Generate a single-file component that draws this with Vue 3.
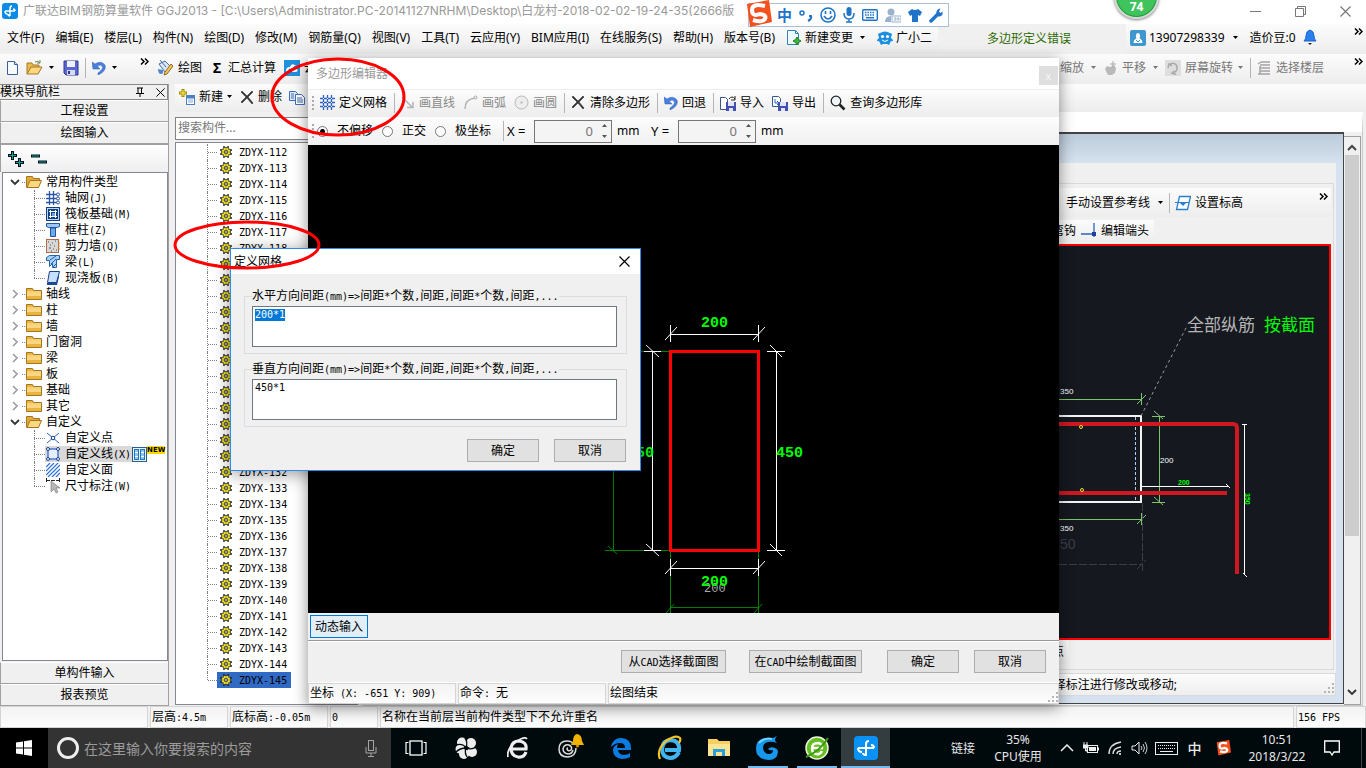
<script setup>
import { h, ref, onMounted } from 'vue'

/* Splits a string so that half-width characters take exactly half of a full-width one */
const Sim = ({ t }) =>
  h('span', { class: 'sim' }, t.split(/([\x20-\x7e]+)/).filter(Boolean).map((p) =>
    /^[\x20-\x7e]/.test(p) ? h('span', { class: 'sim-latin' }, p) : p))
Sim.props = ['t']

const shapes = {
  app: [16, 16, '<rect width="16" height="16" rx="3" fill="#0a8be8"/><path d="M8 13V5.500Q8 3 10 3M3 8h10M3 8q0 3 2.500 3M13 8q0-2-2-2M8 13q-2 0-2-2" fill="none" stroke="#fff" stroke-width="1.500"/>'],
  doc: [16, 16, '<path d="M3.500 1.500h7l3 3v10h-10z" fill="#f7fbff" stroke="#3c5f94"/><path d="M10.500 1.500v3h3" fill="#cfe0f5" stroke="#3c5f94"/>'],
  open: [17, 16, '<path d="M1 14V3h5l1 2h6v2" fill="#e9b84e" stroke="#a9782a"/><path d="M1 14L5 7h11l-4 7z" fill="#fbd77d" stroke="#a9782a"/><path d="M9 2q3-2 5 1M14 0v3h-3" fill="none" stroke="#5d8a50"/>'],
  save: [16, 16, '<path d="M1 1h14v14H3l-2-2z" fill="#5b67cf" stroke="#2f3890"/><rect x="4" y="1" width="8" height="6" fill="#eef2ff"/><rect x="4" y="10" width="8" height="5" fill="#d5daf5"/><rect x="5" y="11" width="2" height="3" fill="#2f3890"/>'],
  undo: [14, 14, '<path d="M0 1l1 7h7L5.500 5.500Q8 3 10 5q2 3-4 7v2q9-4 7-10Q9-1 3 3z" fill="#4a80dc" stroke="#2a5cb4" stroke-width=".5"/>'],
  pencil: [17, 17, '<path d="M2 5l6-3 6 6-6 5z" fill="#d9e8f7" stroke="#446b9c"/><path d="M3 1l6 7" stroke="#446b9c"/><path d="M1 10q0 5 3 5t2-4z" fill="#4e89cd"/><path d="M16 7l-6 8-3 1 1-3 6-8z" fill="#f2c25a" stroke="#946b1e"/>'],
  cloud: [16, 16, '<rect width="16" height="16" fill="#1e90dc"/><path d="M2 11q0-4 4-4 1-4 5-2 3 1 2 4 2 3-2 3H4q-2 0-2-1z" fill="#fff"/><path d="M5 9l2 2 5-5" stroke="#1e90dc" stroke-width="2" fill="none"/>'],
  newc: [17, 17, '<path d="M4 0v8M0 4h8" stroke="#a68a00" stroke-width="3"/><path d="M4 1v6M1 4h6" stroke="#fff05a" stroke-width="1"/><rect x="7.500" y="6.500" width="8" height="9" fill="#fff" stroke="#4a7fc4"/><path d="M7 8h9" stroke="#4a7fc4" stroke-width="3"/><path d="M9 11h5M9 13h5" stroke="#7ea7da"/>'],
  del: [15, 15, '<path d="M1 2l1-1 5 5 5-5 1 1-5 5 5 6-1 1-5-6-5 5-1-1 5-5z" fill="#333" stroke="#333" stroke-width=".6"/>'],
  copy: [16, 15, '<path d="M.5 1.500h6l2 2v7h-8z" fill="#dceafa" stroke="#3f6db5"/><path d="M6.500 4.500h6l3 3v7h-9z" fill="#fff" stroke="#3f6db5"/><path d="M2 4h3M2 6h3M2 8h3M8 8h5M8 10h6M8 12h6" stroke="#3f6db5"/>'],
  newchg: [16, 17, '<path d="M1.500 1.500h8l3 3v11h-11z" fill="#eef8ff" stroke="#3184b8"/><path d="M9.500 1.500v3h3" fill="none" stroke="#3184b8"/><path d="M11 8l1.500 2.500L15 12l-2.500 1.500L11 16l-1.500-2.500L7 12l2.500-1.500z" fill="#3cb33c" stroke="#1f7f1f"/>'],
  owl: [16, 16, '<path d="M1 5q0-2 2-2 5-3 10 0 2 0 2 2-1 1-1 3l2 2q0 2-2 1l-2 4-2-1H6l-2 1-2-4q-2 1-2-1l2-2q0-2-1-3z" fill="#1c8fe0"/><circle cx="5.500" cy="6.500" r="1.600" fill="#fff"/><circle cx="10.500" cy="6.500" r="1.600" fill="#fff"/><path d="M5 10q3 3 6 0" stroke="#fff" fill="none"/>'],
  user: [16, 16, '<rect width="16" height="16" rx="2" fill="#3f97cf"/><path d="M8 3a2.500 3 0 0 1 1.500 5l1 1q2 1 2 4h-9q0-3 2-4l1-1A2.500 3 0 0 1 8 3z" fill="#fff"/><path d="M6 10l2 2 2-2" stroke="#3f97cf" fill="none"/>'],
  bell: [14, 17, '<path d="M7 1q4 1 4 6 0 3 2 5H1q2-2 2-5 0-5 4-6z" fill="#2a7ff0" stroke="#1c63c6"/><path d="M5 14h4l-2 2z" fill="#222"/>'],
  hand: [15, 16, '<path d="M2 9l2-3 3 1 4-2 2 3-1 5-3 2H5z" fill="#b9b9b9"/><path d="M10 1v6M7 4h6" stroke="#aaa"/>'],
  rot: [16, 16, '<rect width="16" height="16" fill="#dedede"/><path d="M4 5q5-4 8 1 1 5-4 7M3 8l1-4 3 2M6 13l4 1-2-3" fill="none" stroke="#a9a9a9" stroke-width="1.500"/>'],
  floors: [15, 15, '<path d="M4 2h9M1 4l3-2M3 5h10M3 8h10M3 11h10M1 14h12M3 6v8" stroke="#a3a3a3" stroke-width="1.500" fill="none"/>'],
  grid: [15, 15, '<path d="M3.500 0v15M7.500 0v15M11.500 0v15M0 3.500h15M0 7.500h15M0 11.500h15" stroke="#2f62c0" stroke-width="1.300" stroke-dasharray="3 1"/>'],
  line: [14, 15, '<path d="M1 2l10 10M12 7v5.500H6" fill="none" stroke="#b4b4b4" stroke-width="1.500"/>'],
  arc: [15, 15, '<path d="M2 14Q2 4 12 3" fill="none" stroke="#b4b4b4" stroke-width="1.500"/><circle cx="12.500" cy="2.500" r="1.500" fill="#eee" stroke="#aaa"/>'],
  circ: [15, 15, '<circle cx="7.500" cy="7.500" r="6.500" fill="#eee" stroke="#bbb"/><circle cx="7.500" cy="7.500" r="1" fill="#aaa"/>'],
  imp: [16, 16, '<path d="M.5 2.500h5l2 2v10h-7z" fill="#fff" stroke="#39568b"/><path d="M6 7h10v9H6z" fill="#4450b0"/><path d="M8 7h6v4H8zM9 13h4v3H9z" fill="#dfe4fa"/><path d="M9 4q3-4 6 0M15 1v4h-4" fill="none" stroke="#222"/>'],
  exp: [16, 16, '<path d="M.5 1.500h6l2 2v8h-8z" fill="#fff" stroke="#39568b"/><path d="M6 7h10v9H6z" fill="#4450b0"/><path d="M8 7h6v4H8zM9 13h4v3H9z" fill="#dfe4fa"/><path d="M3 4v4h4M5 6l2 2-2 2" fill="none" stroke="#2d65b5"/>'],
  find: [16, 16, '<circle cx="6" cy="6" r="4.800" fill="#eef6fb" stroke="#222" stroke-width="1.300"/><path d="M9.500 9.500l5 5" stroke="#222" stroke-width="2.600"/>'],
  pluses: [16, 16, '<path d="M4.500 0v9M0 4.500h9M11.500 7v9M7 11.500h9" stroke="#012" stroke-width="3"/><path d="M4.500 1v7M1 4.500h7M11.500 8v7M8 11.500h7" stroke="#17a08c"/>'],
  minuses: [16, 16, '<path d="M0 5h9M7 11h9" stroke="#012" stroke-width="3"/><path d="M1 5h7M8 11h7" stroke="#17a08c"/>'],
  gear: [12, 12, '<path d="M4 0v12M8 0v12M0 4h12M0 8h12" stroke="#222" stroke-width="1.400"/><circle cx="6" cy="6" r="4.600" fill="#f6ec20" stroke="#222" stroke-width=".7"/><path d="M6 1.500v9M1.500 6h9M3 3l6 6M9 3L3 9" stroke="#333" stroke-width=".5"/><circle cx="6" cy="6" r="1.400" fill="#fff" stroke="#222" stroke-width=".9"/>'],
  folder: [16, 14, '<path d="M.5 12.500v-11h6l1 2h8v9z" fill="#e9b440" stroke="#a47622"/><path d="M1 5h14" stroke="#fff0ba"/><path d="M1 6h14v3H1z" fill="#f8d77e"/>'],
  folderO: [16, 14, '<path d="M.5 12.500v-11h6l1 2h6v3" fill="#e2aa3a" stroke="#a47622"/><path d="M1 12.500L4 5.500h11.500l-3 7z" fill="#f9d880" stroke="#a47622"/>'],
  axis: [14, 14, '<path d="M3.500 0v14M7.500 0v14M0 3.500h11M0 7.500h11M0 11.500h11" stroke="#2a56a4" stroke-width="1.300"/><circle cx="12" cy="3.500" r="1.500" fill="#fff" stroke="#2a56a4"/><circle cx="12" cy="7.500" r="1.500" fill="#fff" stroke="#2a56a4"/><circle cx="12" cy="11.500" r="1.500" fill="#fff" stroke="#2a56a4"/>'],
  raft: [14, 14, '<rect width="14" height="14" fill="#123f7e"/><rect x="1.500" y="1.500" width="11" height="11" fill="none" stroke="#bcd7f7"/><path d="M4.500 3v8M9.500 3v8M3 4.500h8M3 9.500h8" stroke="#fff"/><rect x="6" y="6" width="3" height="3" fill="#6fa5e6"/>'],
  col: [14, 14, '<path d="M.5.5h13v3l-2 1h-9l-2-1z" fill="#9cc9f8" stroke="#26549b"/><path d="M4.500 5h5v8.500h-5z" fill="#6aaaf0" stroke="#26549b"/>'],
  wall: [14, 14, '<rect x=".5" y=".5" width="12" height="13" fill="#d8d8d8" stroke="#b06a46"/><path d="M2 3h1M6 4h1M9 2h1M4 6h1M8 7h1M3 9h2M7 10h1M10 11h1M5 12h1" stroke="#555"/><path d="M12 4h2M12 7h2M12 10h2" stroke="#e07a20"/>'],
  beam: [14, 14, '<path d="M.5 2.500l3-2h10v4h-3v8h-4v-4l-3 3v-6h-3z" fill="#a8d2fa" stroke="#2263ae"/><path d="M4 5l6-4M5 9l5-5M7 12l4-4" stroke="#2263ae"/>'],
  slab: [14, 14, '<path d="M3.500.5h10l-3 11h-9z" fill="#c5e0fb" stroke="#1c3f86"/><path d="M1 12h9l3-9v3l-2 8H1z" fill="#1c4a9c"/>'],
  pt: [14, 14, '<path d="M1 2l12 10M13 2L1 12" stroke="#2a66c0"/><circle cx="7" cy="7" r="1.800" fill="#fff" stroke="#16408c"/>'],
  poly: [14, 14, '<rect x="2" y="2" width="10" height="10" fill="#e6eefb" stroke="#2a5fd0" stroke-width="1.200"/><circle cx="2" cy="2" r="1.500" fill="#fff" stroke="#16408c"/><circle cx="12" cy="2" r="1.500" fill="#fff" stroke="#16408c"/><circle cx="2" cy="12" r="1.500" fill="#fff" stroke="#16408c"/><circle cx="12" cy="12" r="1.500" fill="#fff" stroke="#16408c"/>'],
  hatch: [14, 14, '<path d="M0 4l4-4M0 8l8-8M0 12l12-12M2 14L14 2M6 14l8-8M10 14l4-4" stroke="#2a6fd6" stroke-width="1.200"/>'],
  dim: [14, 16, '<path d="M.5 0v5M13.500 0v5M0 2.500h14" stroke="#222" stroke-dasharray="4 1"/><path d="M5 3v11l3-3 2 4 2-1-2-4h4z" fill="#b6b6b6" stroke="#777" stroke-width=".6"/>'],
  video: [15, 15, '<rect x=".5" y=".5" width="14" height="14" fill="#e4f2fd" stroke="#2b5d8c"/><rect x="2.500" y="2.500" width="4" height="10" fill="#8cc4ee" stroke="#1f74bc"/><rect x="8.500" y="2.500" width="4" height="10" fill="#8cc4ee" stroke="#1f74bc"/><path d="M3 5.500h3M3 9.500h3M9 5.500h3M9 9.500h3" stroke="#fff"/>'],
  elev: [16, 16, '<path d="M4.500 1.500h11l-3 13h-11z" fill="#fff" stroke="#2a7fd0" stroke-width="1.300"/><path d="M0 7.500h14" stroke="#2a7fd0"/><path d="M5 8l3 3 3-3z" fill="#2a7fd0"/>'],
  endp: [16, 16, '<path d="M0 11h15M13 0v14" stroke="#2a66c0" stroke-width="1.300"/><rect x="11" y="9" width="4" height="4" fill="#1b3f9b"/>'],
  sogou: [28, 28, '<path d="M3 4L25 0l3 22-22 5z" fill="#f4511e"/><path d="M21 6Q8 3 8 10t8 4q7 1 5 5-3 4-12 1" fill="none" stroke="#fff" stroke-width="4"/>'],
  punct: [14, 14, '<circle cx="3" cy="5" r="2" fill="none" stroke="#1f74c8" stroke-width="1.500"/><path d="M10 8h2q1 3-3 5" fill="none" stroke="#1f74c8" stroke-width="2"/>'],
  smile: [16, 16, '<circle cx="8" cy="8" r="7" fill="none" stroke="#1f74c8" stroke-width="1.600"/><path d="M5.500 4v3M10.500 4v3M4 9q4 6 8 0" fill="none" stroke="#1f74c8" stroke-width="1.600"/>'],
  mic: [12, 16, '<rect x="3.500" y="0" width="5" height="9" rx="2.500" fill="#1f74c8"/><path d="M1 6q0 6 5 6t5-6M6 12v3M3 15h6" fill="none" stroke="#1f74c8" stroke-width="1.500"/>'],
  kb: [16, 12, '<rect x=".7" y=".7" width="14.600" height="10.600" rx="1" fill="#fff" stroke="#1f74c8" stroke-width="1.400"/><path d="M3 3.500h10M3 6h10" stroke="#1f74c8" stroke-width="1.500" stroke-dasharray="1.500 1"/><path d="M4 8.700h8" stroke="#1f74c8" stroke-width="1.500"/>'],
  person: [16, 15, '<circle cx="6" cy="4" r="3.500" fill="#9ab3cd"/><path d="M0 14q0-6 6-6v6z" fill="#9ab3cd"/><rect x="7" y="8" width="9" height="6" fill="#fff" stroke="#9ab3cd"/><path d="M9 10h2v2h-2M12 10h2v2h-2" fill="none" stroke="#9ab3cd"/>'],
  shirt: [14, 13, '<path d="M4 0q3 2 6 0l4 3-2 4-2-1v7H4V6L2 7 0 3z" fill="#1f74c8"/>'],
  wrench: [15, 15, '<path d="M2 13L9 6" stroke="#1f74c8" stroke-width="3.500" stroke-linecap="round"/><path d="M13.500 3.500q1 5-4 5-3-1-2-5 1-3 4-3l-1.500 3 1.500 1.500z" fill="#1f74c8"/>'],
  win: [16, 16, '<path d="M0 2.500l7-1v6H0zM8 1.300L16 0v7.500H8zM0 8.500h7v6l-7-1zM8 8.500h8V16l-8-1.300z" fill="#fff"/>'],
  tmic: [12, 17, '<rect x="3.500" y=".5" width="5" height="10" fill="none" stroke="#a5a5a5"/><path d="M1 7v6h10V7M6 13v3M3 16.500h6" fill="none" stroke="#a5a5a5"/>'],
  task: [22, 16, '<rect x="5" y="1" width="12" height="14" fill="none" stroke="#fff" stroke-width="1.300"/><path d="M3.500 2.500H1v11h2.500M18.500 2.500H21v11h-2.500" fill="none" stroke="#fff" stroke-width="1.200"/>'],
  fan: [22, 22, '<g fill="#eee"><circle cx="7" cy="5.500" r="5"/><circle cx="16" cy="6" r="5"/><circle cx="17" cy="15" r="5"/><circle cx="9" cy="17" r="5"/><circle cx="5" cy="12" r="4.500"/></g><path d="M11 11Q13 5 10 1M11 11Q17 13 21 10M11 11Q9 17 13 21M11 11Q5 11 1 15M11 11Q8 6 1 8" fill="none" stroke="#00090c" stroke-width="1.300"/><circle cx="11" cy="11" r="2" fill="#00090c"/>'],
  iew: [22, 22, '<path d="M19 15q-2 6-8 5-7-1-7-9 1-7 8-7 8 1 7 8H5" fill="none" stroke="#eee" stroke-width="3.200"/><path d="M1 20Q-1 12 10 4q8-5 10-2" fill="none" stroke="#eee" stroke-width="1.800"/>'],
  gbell: [28, 28, '<path d="M20 14q0 8-8 9Q3 23 3 15T11 7q5 0 6 3M17 16q-1 4-5 4-5-1-5-5 1-5 6-4 4 2 2 5-3 2-4-1 0-1 1-1" fill="none" stroke="#ddd" stroke-width="1.500"/><path d="M21 0q5 1 5 7l2 4H15l2-4q0-6 4-7z" fill="#f0b400"/><circle cx="21.500" cy="12" r="1.600" fill="#d88a00"/>'],
  edge: [22, 22, '<path d="M1 9Q4 0 12 1q9 1 9 10v2H8q1 5 6 5 4 0 6-2v4q-3 2-8 2-9-1-9-9 0-4 5-6-1 2-1 4h8q0-5-5-5-5 0-9 4z" fill="#0a7be0"/>'],
  ie: [26, 26, '<path d="M22 17q-3 6-9 6-8-1-8-9 1-9 9-9 9 1 8 10H8" fill="none" stroke="#42b5f1" stroke-width="4"/><path d="M3 24Q-1 15 9 6 19-1 23 3q1 2-1 5" fill="none" stroke="#f3c326" stroke-width="2.200"/>'],
  files: [24, 20, '<path d="M1 3V1h9l2 2h11v15H1z" fill="#f6cf62"/><path d="M1 6h22v12H1z" fill="#fce592"/><path d="M6 18v-7h12v7h-3v-4H9v4z" fill="#2a9ddd"/>'],
  blueg: [26, 26, '<path d="M22 1q-4 4 0 7-5-2-9-1-5 1-5 6 1 6 6 6 4 0 4-4-3 1-5-1 3-3 7-1 3 1 3 4-1 8-9 8Q1 24 1 14 1 3 12 3q6 1 10-2z" fill="#1598ee"/><path d="M4 8Q10 2 17 4" stroke="#72d3ff" stroke-width="2" fill="none"/>'],
  greene: [26, 26, '<circle cx="13" cy="13" r="11" fill="#64bd21" stroke="#e9f5dc" stroke-width="1.500"/><path d="M18 16q-2 4-6 3-4-1-4-6t6-5q5 1 4 5H8" fill="none" stroke="#fff" stroke-width="2.400"/><path d="M2 22Q16 16 24 3" fill="none" stroke="#3c9c10" stroke-width="2"/>'],
  appb: [24, 24, '<rect width="24" height="24" rx="4" fill="#0a91f5"/><path d="M12 20V8q0-3 3-3M4 12h16M4 12q0 4 4 4M20 12q0-3-3-3M12 19q-3 0-3-2" fill="none" stroke="#fff" stroke-width="2"/>'],
  up: [14, 8, '<path d="M1 7l6-6 6 6" fill="none" stroke="#eee" stroke-width="1.500"/>'],
  batt: [16, 14, '<rect x="4.500" y="4.500" width="10" height="7" fill="none" stroke="#eee"/><rect x="6" y="6" width="7" height="4" fill="#eee"/><path d="M15.500 6.500v3M1 1v3M4 1v3M0 4h5v3H0zM2.500 7v3h2" stroke="#eee" fill="#eee"/>'],
  wifi: [14, 14, '<path d="M1 13Q1 3 13 1M5 13q0-6 8-7M9 13q0-3 4-3" fill="none" stroke="#ddd" stroke-width="1.400"/><circle cx="12" cy="13" r="1" fill="#fff"/>'],
  vol: [17, 14, '<path d="M1 5h3l4-4v12L4 9H1z" fill="none" stroke="#eee"/><path d="M10 5q2 2 0 4M12 3q3 4 0 8M14 1q4 6 0 12" fill="none" stroke="#ccc"/>'],
  tkb: [23, 13, '<rect x=".5" y=".5" width="22" height="12" fill="none" stroke="#eee"/><path d="M3 3.500h17M3 6.500h17" stroke="#eee" stroke-dasharray="1 1"/><path d="M5 9.500h13" stroke="#eee"/>'],
  note: [16, 16, '<path d="M.7 1h14.600v11H10l-2 3-2-3H.7z" fill="none" stroke="#fff" stroke-width="1.300"/>'],
  pin: [8, 10, '<path d="M1 1h6M2 1v5M5.500 1v5M0 6.500h8M4 6v4" fill="none" stroke="#000"/>'],
  x: [11, 11, '<path d="M.5.5l10 10M10.500.5l-10 10" stroke="currentColor" stroke-width="1.200"/>'],
  min: [11, 11, '<path d="M0 5.500h11" stroke="#777"/>'],
  restore: [11, 11, '<path d="M2.500 2.500v-2h8v8h-2M.5 2.500h8v8h-8z" fill="none" stroke="#777"/>'],
  more: [9, 7, '<path d="M1 .500l3 3-3 3M5 .500l3 3-3 3" fill="none" stroke="#000" stroke-width="1.500"/>'],
  down: [7, 4, '<path d="M1 0h5L3.500 3z" fill="currentColor"/>'],
  spinU: [5, 3, '<path d="M0 3h5L2.500 0z" fill="#555"/>'],
  spinD: [5, 3, '<path d="M0 0h5L2.500 3z" fill="#555"/>'],
  chevD: [10, 7, '<path d="M1 1l4 4 4-4" fill="none" stroke="#333" stroke-width="1.800"/>'],
  chevR: [7, 10, '<path d="M1 1l4 4-4 4" fill="none" stroke="#999" stroke-width="1.500"/>'],
  chevU: [10, 7, '<path d="M1 6l4-4 4 4" fill="none" stroke="#444" stroke-width="2"/>'],
  resize: [12, 12, '<path d="M9 0h2v2H9zM9 4h2v2H9zM9 8h2v2H9zM5 4h2v2H5zM5 8h2v2H5zM1 8h2v2H1z" fill="#b5b5b5"/>'],
}
const Ic = ({ n, s }) => {
  const [w, ht, body] = shapes[n]
  const k = s ? s / w : 1
  return h('svg', { class: 'ic', width: Math.round(w * k), height: Math.round(ht * k), viewBox: `0 0 ${w} ${ht}`, innerHTML: body, 'aria-hidden': 'true' })
}
Ic.props = ['n', 's']

const menus = ['文件(F)', '编辑(E)', '楼层(L)', '构件(N)', '绘图(D)', '修改(M)', '钢筋量(Q)', '视图(V)', '工具(T)', '云应用(Y)', 'BIM应用(I)', '在线服务(S)', '帮助(H)', '版本号(B)']

const tree = [
  { t: '常用构件类型', i: 'folderO', open: 1 },
  { t: '轴网(J)', i: 'axis', sub: 1 }, { t: '筏板基础(M)', i: 'raft', sub: 1 }, { t: '框柱(Z)', i: 'col', sub: 1 },
  { t: '剪力墙(Q)', i: 'wall', sub: 1 }, { t: '梁(L)', i: 'beam', sub: 1 }, { t: '现浇板(B)', i: 'slab', sub: 1, last: 1 },
  ...['轴线', '柱', '墙', '门窗洞', '梁', '板', '基础', '其它'].map((t) => ({ t, i: 'folder' })),
  { t: '自定义', i: 'folderO', open: 1 },
  { t: '自定义点', i: 'pt', sub: 1 }, { t: '自定义线(X)', i: 'poly', sub: 1, sel: 1 }, { t: '自定义面', i: 'hatch', sub: 1 },
  { t: '尺寸标注(W)', i: 'dim', sub: 1, last: 1 },
]
const parts = Array.from({ length: 34 }, (_, i) => `ZDYX-${112 + i}`)

const tools = [
  { i: 'grid', t: '定义网格' }, 0, { i: 'line', t: '画直线', off: 1 }, { i: 'arc', t: '画弧', off: 1 }, { i: 'circ', t: '画圆', off: 1 }, 0,
  { i: 'del', t: '清除多边形' }, 0, { i: 'undo', t: '回退' }, 0, { i: 'imp', t: '导入' }, { i: 'exp', t: '导出' }, 0, { i: 'find', t: '查询多边形库' },
]
const apps = [
  { n: 'task' }, { n: 'fan', wide: 1 }, { n: 'iew', wide: 1 }, { n: 'gbell', wide: 1 }, { n: 'edge' }, { n: 'ie' },
  { n: 'files' }, { n: 'blueg', run: 1 }, { n: 'greene', run: 1 }, { n: 'appb', run: 1, on: 1 },
]

const offset = ref('none')
const dx = ref('0')
const dy = ref('0')
const hGrid = ref('200*1')
const vGrid = ref('450*1')
const hBox = ref(null)
onMounted(() => {
  hBox.value.focus()
  hBox.value.select()
})
</script>

<template>
  <div class="desk">
    <header class="title">
      <Ic n="app" /><span class="title-text">广联达BIM钢筋算量软件 GGJ2013 - [C:\Users\Administrator.PC-20141127NRHM\Desktop\白龙村-2018-02-02-19-24-35(2666版</span>
      <span class="wctl"><button aria-label="最小化"><Ic n="min" /></button><button aria-label="还原"><Ic n="restore" /></button><button aria-label="关闭"><Ic n="x" /></button></span>
    </header>

    <nav class="menubar">
      <div class="menus strip">
        <button v-for="m in menus" :key="m">{{ m }}</button>
        <button class="wi"><Ic n="newchg" />新建变更<Ic n="down" class="dd" /></button>
        <button class="wi"><Ic n="owl" />广小二</button>
      </div>
      <span class="err">多边形定义错误</span>
      <div class="account strip">
        <button class="wi"><Ic n="user" />13907298339<Ic n="down" class="dd" /></button>
        <span>造价豆:0</span><Ic n="bell" /><Ic n="more" class="far" />
      </div>
    </nav>

    <div class="mainbar">
      <div class="strip quick">
        <button aria-label="新建"><Ic n="doc" /></button>
        <button aria-label="打开"><Ic n="open" /><Ic n="down" class="dd" /></button>
        <button aria-label="保存"><Ic n="save" /></button><i class="sep"></i>
        <button aria-label="撤销"><Ic n="undo" /><Ic n="down" class="dd" /></button>
        <Ic n="more" class="far" />
      </div>
      <div class="strip cmds">
        <button><Ic n="pencil" />绘图</button>
        <button><b class="sigma">Σ</b>汇总计算</button>
        <button><Ic n="cloud" />云检查</button>
        <span class="view-tools">
          <button>缩放<Ic n="down" class="dd" /></button>
          <button><Ic n="hand" />平移<Ic n="down" class="dd" /></button>
          <button><Ic n="rot" />屏幕旋转<Ic n="down" /></button><i class="sep"></i>
          <button><Ic n="floors" />选择楼层</button>
        </span>
        <Ic n="more" class="far" />
      </div>
    </div>

    <main class="body">
      <aside class="nav">
        <h2><Sim t="模块导航栏" /><span><Ic n="pin" /><Ic n="x" :s="9" /></span></h2>
        <button class="bar">工程设置</button>
        <button class="bar">绘图输入</button>
        <div class="fold"><Ic n="pluses" /><Ic n="minuses" /></div>
        <ul class="tree">
          <li v-for="(r, k) in tree" :key="k" :class="{ sub: r.sub, last: r.last, sel: r.sel }">
            <span v-if="!r.sub" class="tw"><Ic :n="r.open ? 'chevD' : 'chevR'" /></span>
            <i class="dots"></i><span class="lab"><Ic :n="r.i" /><Sim :t="r.t" /></span>
            <template v-if="r.sel"><Ic n="video" /><b class="new">NEW</b></template>
          </li>
        </ul>
        <button class="bar">单构件输入</button>
        <button class="bar">报表预览</button>
      </aside>

      <section class="work">
        <div class="strip ctools">
          <button><Ic n="newc" />新建<Ic n="down" /></button>
          <button><Ic n="del" />删除</button>
          <button aria-label="复制"><Ic n="copy" /></button>
        </div>
        <div class="split">
          <div class="parts">
            <input class="search" aria-label="搜索构件" placeholder="搜索构件..." />
            <ul>
              <li v-for="(p, k) in parts" :key="p" :class="{ sel: k === 33 }"><i class="dots"></i><span class="lab"><Ic n="gear" /><Sim :t="p" /></span></li>
            </ul>
          </div>
          <div class="mdi">
            <div class="child">
              <div class="cap"></div>
              <div class="inner">
                <div class="tab"></div>
                <div class="pane">
                  <div class="strip prow"><button>手动设置参考线<Ic n="down" class="dd" /></button><i class="sep"></i><button><Ic n="elev" />设置标高</button><Ic n="more" class="far" /></div>
                  <div class="prow two"><div class="strip"><button>弯钩</button><button><Ic n="endp" />编辑端头</button></div></div>
                  <div class="cad">
                    <svg width="270" height="392" viewBox="1059 246 270 392" fill="none">
                      <path d="M1059 399.500h82.500M1141.500 393v12M1137 404l9-9M1059 519.500h82.500M1141.500 513v12M1137 524l9-9M1159.500 416v87M1152 416.500h13M1152 502.500h13M1154 411l9 8M1154 497l9 8" stroke="#7cc36c" />
                      <path d="M1059 416h82v86h-82" stroke="#f4f4f4" stroke-width="2" />
                      <path d="M1135.500 417v84" stroke="#a9d0f5" stroke-dasharray="3 2" />
                      <path d="M1141 416l46-90" stroke="#999" stroke-dasharray="3 3" />
                      <path d="M1142.500 503v68M1059 564.500h83M1137 569l9-9" stroke="#3b3f49" stroke-dasharray="8 2" />
                      <path d="M1059 424h174q4 0 4 4v146M1059 493h168" stroke="#cf1820" stroke-width="4" />
                      <circle cx="1081" cy="427" r="1.500" stroke="#f2e22c" /><circle cx="1082" cy="490" r="1.500" stroke="#f2e22c" />
                      <path d="M1142 486.500h87M1226 484l4 4M1244.500 424v151M1242 424.500h5M1243 573l4 4" stroke="#fff" />
                      <g class="tiny" fill="#fff"><text x="1060" y="394">350</text><text x="1160" y="463">200</text><text x="1060" y="531">350</text></g>
                      <g class="micro" fill="#0f0"><text x="1178" y="485">200</text><text transform="translate(1245 493) rotate(90)">350</text></g>
                      <text class="ghost" x="1060" y="549" fill="#3b3f49">50</text>
                      <g class="big"><text x="1187" y="331" fill="#b5b5b5">全部纵筋</text><text x="1264" y="331" fill="#0f0">按截面</text></g>
                    </svg>
                  </div>
                  <div class="after"><div class="strip"><span>端点</span></div></div>
                </div>
                <div class="cstat"><span>选择标注进行修改或移动;</span><Ic n="resize" /></div>
              </div>
            </div>
            <div class="vbar"><Ic n="chevU" /><div class="thumb"></div><Ic n="chevD" /></div>
          </div>
        </div>
      </section>
    </main>

    <footer class="status">
      <span class="c1"></span><span class="c2"><Sim t="层高:4.5m" /></span><span class="c3"><Sim t="底标高:-0.05m" /></span><span class="c4"><Sim t="0" /></span>
      <span class="c5">名称在当前层当前构件类型下不允许重名</span><span class="c6"><Sim t="156 FPS" /></span>
    </footer>

    <div class="taskbar">
      <button class="start" aria-label="开始"><Ic n="win" /></button>
      <label class="cortana"><i class="ring"></i><input placeholder="在这里输入你要搜索的内容" aria-label="搜索" /><Ic n="tmic" /></label>
      <button v-for="a in apps" :key="a.n" class="app" :class="{ wide: a.wide, run: a.run, on: a.on }" :aria-label="a.n"><Ic :n="a.n" /></button>
      <div class="tray">
        <span class="links">链接</span>
        <span class="cpu">35%<br />CPU使用</span>
        <i><Ic n="up" /></i><i><Ic n="batt" /></i><i><Ic n="wifi" /></i><i><Ic n="vol" /></i><i class="k"><Ic n="tkb" /></i><b>中</b><i class="k"><Ic n="sogou" :s="16" /></i>
        <span class="clock">10:51<br />2018/3/22</span>
        <i class="k"><Ic n="note" /></i><i class="peek"></i>
      </div>
    </div>

    <section class="editor">
      <div class="ecap"><span>多边形编辑器</span><button aria-label="关闭">x</button></div>
      <div class="strip etools">
        <i class="grip"></i>
        <template v-for="(t, k) in tools" :key="k"><i v-if="!t" class="sep"></i><button v-else :class="{ off: t.off }"><Ic :n="t.i" />{{ t.t }}</button></template>
      </div>
      <div class="strip eopts">
        <i class="grip"></i>
        <label><input v-model="offset" type="radio" name="offset" value="none" />不偏移</label>
        <label><input v-model="offset" type="radio" name="offset" value="ortho" />正交</label>
        <label><input v-model="offset" type="radio" name="offset" value="polar" />极坐标</label>
        <i class="sep"></i>
        <label class="num" for="dx">X =</label><span class="spin"><input id="dx" v-model="dx" /><span><Ic n="spinU" /><Ic n="spinD" /></span></span><span class="mm">mm</span>
        <label class="num" for="dy">Y =</label><span class="spin"><input id="dy" v-model="dy" /><span><Ic n="spinU" /><Ic n="spinD" /></span></span><span class="mm">mm</span>
      </div>
      <div class="canvas">
        <svg width="751" height="468" viewBox="308 145 751 468" fill="none">
          <path d="M613.500 351v200M605 550.500h65M605 351.500h65M608 546l9 8M670.500 551v62M758.500 551v62M670 607.500h89M666 613l8-9M754 613l8-9" stroke="#008000" />
          <path d="M670 334.500h89M670.500 325v17M758.500 325v17M665 340l12-13M753 340l12-13M670 568.500h89M670.500 559v17M758.500 559v17M665 574l12-13M753 574l12-13M652.500 351v200M644 351.500h17M644 550.500h17M646 345l13 12M646 544l13 12M776.500 351v200M767 351.500h18M767 550.500h18M770 345l12 12M770 544l12 12" stroke="#fff" />
          <rect x="670.500" y="351.500" width="88" height="199" stroke="#f00" stroke-width="3" />
          <text class="grey" x="704" y="592" fill="#aaa">200</text>
          <g class="dimtext" fill="#0f0"><text x="701" y="327">200</text><text x="701" y="586">200</text><text x="627" y="457">450</text><text x="776" y="457">450</text></g>
        </svg>
      </div>
      <div class="dyn"><button>动态输入</button></div>
      <div class="ebtns"><button class="btn"><Sim t="从CAD选择截面图" /></button><button class="btn wide"><Sim t="在CAD中绘制截面图" /></button><button class="btn ok">确定</button><button class="btn ok">取消</button></div>
      <div class="estat"><span><Sim t="坐标 (X: -651 Y: 909)" /></span><span><Sim t="命令: 无" /></span><span class="grow">绘图结束</span><Ic n="resize" /></div>
    </section>

    <form class="dialog" @submit.prevent>
      <div class="dcap"><span>定义网格</span><button type="button" aria-label="关闭"><Ic n="x" /></button></div>
      <div class="dbody">
        <fieldset><legend><label for="hg"><Sim t="水平方向间距(mm)=>间距*个数,间距,间距*个数,间距,..." /></label></legend><textarea id="hg" ref="hBox" v-model="hGrid" spellcheck="false"></textarea></fieldset>
        <fieldset><legend><label for="vg"><Sim t="垂直方向间距(mm)=>间距*个数,间距,间距*个数,间距,..." /></label></legend><textarea id="vg" v-model="vGrid" spellcheck="false"></textarea></fieldset>
        <div class="dbtns"><button class="btn ok">确定</button><button type="button" class="btn ok">取消</button></div>
      </div>
    </form>

    <div class="ime"><b>中</b><Ic n="punct" /><Ic n="smile" /><Ic n="mic" /><Ic n="kb" /><Ic n="person" /><Ic n="shirt" /><Ic n="wrench" /></div>
    <span class="imelogo"><Ic n="sogou" /></span>
    <div class="ball">74</div>

    <svg class="marks" width="410" height="280" fill="none" stroke="#f00" stroke-width="3" aria-hidden="true">
      <ellipse cx="338" cy="97" rx="66" ry="38" /><ellipse cx="247" cy="245" rx="72" ry="23" />
    </svg>
  </div>
</template>

<style>
html, body { margin: 0; background: #f0f0f0; }
.sim { white-space: pre; }
.sim-latin { font-family: "DejaVu Sans Mono", monospace; font-size: 10px; line-height: 0; }
.ic { display: block; flex: none; }
</style>

<style scoped>
* { box-sizing: border-box; }
.desk { position: relative; display: flex; flex-direction: column; min-height: 100vh; overflow: hidden; background: #f0f0f0; color: #000; font: 12px/16px "Noto Sans", "Noto Sans CJK SC", sans-serif; }
button { display: flex; align-items: center; gap: 4px; margin: 0; padding: 0; border: 0; background: none; color: inherit; font: inherit; white-space: nowrap; }
ul { margin: 0; padding: 0; list-style: none; }
i, b { font-style: normal; flex: none; }
.strip { background: linear-gradient(#fcfcfc, #ededed); display: flex; align-items: center; }
.sep { width: 1px; height: 20px; background: #b5b5b5; }
.dd { margin: 0 4px; }
.far { margin-left: auto; align-self: flex-start; margin-top: 4px; }

.title { display: flex; align-items: center; height: 24px; padding: 0 15px 2px 2px; background: #fff; color: #999; }
.title-text { flex: 1; margin-left: 5px; white-space: nowrap; overflow: hidden; font-family: Inter, "Noto Sans CJK SC", sans-serif; }
.wctl { display: flex; gap: 34px; color: #777; }

.menubar { display: flex; height: 30px; align-items: stretch; }
.menus { gap: 11px; padding: 0 6px 0 7px; height: 27px; }
.menus .dd { margin: 0 0 0 3px; }
.wi { gap: 3px; }
.err { flex: 1; align-self: center; padding-left: 49px; color: #2d6a00; white-space: nowrap; }
.account { width: 240px; height: 30px; padding: 0 3px 3px 4px; gap: 7px; }

.mainbar { display: flex; height: 30px; }
.quick { width: 153px; padding: 0 4px 3px; gap: 6px; color: #000; }
.quick .dd { margin: 0 2px 0 1px; }
.cmds { flex: 1; padding: 0 3px 3px 4px; gap: 8px; }
.sigma { width: 14px; font-size: 14px; }
.view-tools { display: flex; align-items: center; gap: 6px; margin-left: auto; margin-right: 22px; color: #777; }
.view-tools .dd { margin: 0 0 0 2px; }
.view-tools + .far { margin-left: 0; }

.body { display: flex; flex: 1; gap: 6px; }
.nav { display: flex; flex-direction: column; width: 169px; border-right: 1px solid #a0a0a0; }
.nav h2 { display: flex; justify-content: space-between; align-items: center; margin: 0; height: 16px; border: 1px solid #888; border-left: 0; font-size: 12px; font-weight: 400; line-height: 14px; }
.nav h2 span { display: flex; gap: 12px; align-items: center; padding-right: 2px; }
.bar { justify-content: center; height: 22px; border: 1px solid #a0a0a0; border-right: 0; border-top-color: #fff; background: #f0f0f0; }
.fold { display: flex; align-items: center; gap: 7px; height: 28px; padding: 0 7px; border: 1px solid #a0a0a0; border-width: 1px 0 0 1px; background: linear-gradient(#fff, #eee); }
.tree { flex: 1; margin: 0 0 1px 2px; padding-top: 1px; border: 1px solid #828790; background: #fff; overflow: hidden; }
.tree li { position: relative; display: flex; align-items: center; height: 16px; padding-left: 6px; white-space: nowrap; }
.tw { display: flex; justify-content: center; width: 12px; }
.dots { width: 3px; margin-left: 1px; height: 1px; border-top: 1px dotted #808080; }
.lab { display: flex; align-items: center; height: 16px; gap: 4px; padding: 0 2px 0 1px; }
.tree .sub { padding-left: 31px; border: 0; }
.sub .lab { gap: 5px; }
.sub .dots { width: 11px; margin-left: 0; }
.tree .sub::before { content: ""; position: absolute; left: 31px; top: 0; height: 16px; border-left: 1px dotted #808080; }
.tree .last::before { height: 8px; }
.sel .lab { background: #d9d9d9; }
.tree .sel .lab { padding-right: 1px; }
.new { align-self: flex-start; color: #000; background: #ffd800; font: bold 7px/8px "DejaVu Sans", sans-serif; }

.work { display: flex; flex: 1; flex-direction: column; min-width: 0; }
.ctools { height: 28px; padding: 0 4px 2px; gap: 7px; }
.ctools button { gap: 3px; }
.split { display: flex; flex: 1; gap: 4px; }
.parts { display: flex; flex-direction: column; width: 183px; padding: 5px 0 1px; }
.search { height: 23px; width: 100%; margin: 0 0 2px; padding: 0 2px 2px; border: 1px solid #828282; background: #fff; font: inherit; outline: 0; }
.search::placeholder { color: #777; }
.parts ul { flex: 1; padding-top: 1px; border: 1px solid #828790; background: #fff; }
.parts li { display: flex; align-items: center; height: 16px; padding-left: 31px; }
.parts li::before { content: ""; height: 16px; border-left: 1px dotted #808080; }
.parts li:last-child::before { height: 8px; align-self: flex-start; }
.parts .dots { width: 9px; margin: 0; }
.parts .lab { gap: 7px; padding: 0 4px 0 3px; }
.parts .sel .lab { background: #316ac5; }

.mdi { display: flex; flex: 1; margin-right: 3px; padding-right: 1px; border-right: 1px solid #c8c8c8; border-bottom: 1px solid #c8c8c8; border-top: 20px solid #fff; min-width: 0; }
.child { display: flex; flex: 1; flex-direction: column; margin-bottom: 1px; padding: 0 7px 7px; border: 1px solid #444; border-top-width: 2px; background: #d6e2f0; min-width: 0; }
.cap { height: 29px; margin: 0 -7px; background: linear-gradient(#bccbda, #d5e2ef); }
.inner { display: flex; flex: 1; flex-direction: column; background: #f0f0f0; }
.tab { height: 20px; }
.pane { display: flex; flex: 1; flex-direction: column; margin-right: 2px; padding: 4px 2px 0 0; border: 1px solid #dadada; border-left: 0; }
.prow { height: 29px; justify-content: flex-end; }
.prow button { margin-right: 5px; }
.prow .dd { margin: 0 0 0 3px; }
.prow .sep { margin-right: 5px; }
.prow .far { margin: 5px 3px 0 71px; }
.two { display: flex; align-items: center; background: none; height: 27px; padding-right: 177px; }
.two .strip { height: 22px; }
.cad { display: flex; justify-content: flex-end; flex: 1; border: 2px solid #f00; background: #15181f; overflow: hidden; }
.cad svg { flex: none; display: block; }
.tiny { font: 8px "Liberation Sans", sans-serif; }
.micro { font: bold 7px "Liberation Sans", sans-serif; }
.ghost { font: 14px "Liberation Sans", sans-serif; }
.big { font: 17px "Noto Sans CJK SC", sans-serif; }
.after { display: flex; justify-content: flex-end; height: 29px; padding-right: 262px; }
.after .strip { height: 24px; padding-right: 5px; }
.cstat { display: flex; justify-content: flex-end; align-items: center; height: 23px; margin-top: 3px; border: 1px solid #dadada; background: linear-gradient(#fcfcfc, #eee); }
.cstat .ic { margin-left: 146px; align-self: flex-end; }
.vbar { display: flex; flex-direction: column; align-items: center; width: 17px; margin-top: 4px; padding: 7px 1px 8px 0; border: 1px solid #a0a0a0; border-left: 0; background: #f0f0f0; }
.thumb { width: 14px; flex: none; height: 69%; margin: 4px 0 auto; background: #cdcdcd; }

.status { display: flex; gap: 2px; height: 22px; background: #f0f0f0; }
.status > span { border: 1px solid #d5d5d5; background: linear-gradient(#f3f3f3, #fdfdfd); line-height: 20px; padding-left: 1px; white-space: nowrap; }
.c1 { width: 148px; } .c2 { width: 78px; } .c3 { width: 98px; } .c4 { width: 48px; } .c5 { flex: 1; } .c6 { width: 70px; }

.taskbar { position: relative; z-index: 3; display: flex; height: 40px; background: #00090c; color: #e8e8e8; }
.start { width: 48px; justify-content: center; background: #000; }
.cortana { display: flex; align-items: center; width: 343px; padding: 0 14px 0 9px; background: #333; }
.ring { width: 22px; height: 22px; border: 3px solid #eee; border-radius: 50%; }
.cortana input { flex: 1; min-width: 0; margin-left: 5px; padding: 0; border: 0; background: none; font: 14px/20px "Noto Sans CJK SC", sans-serif; outline: 0; }
.cortana input::placeholder { color: #9b9b9b; }
.app { justify-content: center; width: 49px; }
.wide.app { width: 52px; }
.run { background: linear-gradient(#76b9ed, #76b9ed) center bottom / 40px 2px no-repeat; }
.run.on { background: linear-gradient(#76b9ed, #76b9ed) bottom / 100% 2px no-repeat #333d40; }
.tray { display: flex; align-items: center; margin-left: auto; text-align: center; line-height: 17px; white-space: nowrap; }
.links { margin-right: 18px; }
.cpu { width: 50px; margin-right: 12px; }
.tray i { display: flex; justify-content: center; width: 24px; }
.tray .k { width: 31px; }
.tray b { width: 25px; font-size: 14px; font-weight: 500; }
.clock { width: 78px; }
.tray .peek { width: 5px; height: 40px; margin-left: 14px; border-left: 1px solid #444; }

.editor { position: absolute; left: 308px; top: 58px; display: flex; flex-direction: column; width: 751px; background: #f0f0f0; box-shadow: 0 3px 14px rgba(0, 0, 0, .45); }
.ecap { display: flex; justify-content: space-between; align-items: center; height: 31px; padding: 4px 1px 0 8px; background: #fff; color: #999; }
.ecap > span { padding-bottom: 3px; }
.ecap button { justify-content: center; width: 19px; height: 19px; background: #dedede; color: #f6f6f6; font-size: 10px; }
.etools { height: 28px; padding: 0 0 2px 4px; border-top: 1px solid #eee; }
.etools button { padding: 0 4px; }
.etools .sep { margin: 0 2px 0 3px; }
.off { color: #888; }
.grip { width: 2px; height: 14px; margin-right: 2px; background: repeating-linear-gradient(#aaa 0 2px, transparent 2px 4px); }
.eopts { height: 28px; padding-left: 4px; background: linear-gradient(#fdfdfd, #f0f0f0); }
.eopts label { display: flex; align-items: center; white-space: nowrap; margin-right: 9px; }
.eopts input[type=radio] { width: 11px; height: 11px; margin: 0 9px 0 0; appearance: none; border: 1px solid #777; border-radius: 50%; background: #fff; }
.eopts input[type=radio]:checked { background: radial-gradient(#000 0 2px, #fff 3px); }
.eopts .grip + label input { margin-left: 1px; }
.eopts .sep { margin: 0 3px; }
.eopts .num { width: 27px; margin: 0; font: 13px/16px "Noto Sans", sans-serif; }
.spin { display: flex; align-items: center; width: 78px; height: 23px; border: 1px solid #777; background: #f4f4f4; }
.spin input { flex: 1; min-width: 0; padding: 0; border: 0; background: none; color: #777; font: 13px/16px "Noto Sans", sans-serif; text-align: right; outline: 0; }
.spin span { display: flex; flex-direction: column; gap: 8px; padding: 0 4px 0 9px; }
.mm { width: 34px; margin-left: 5px; }
.canvas { background: #000; overflow: hidden; }
.canvas svg { display: block; }
.dimtext { font: bold 15px "Liberation Mono", monospace; }
.grey { font: 12px "Liberation Mono", monospace; }
.dyn { height: 28px; padding: 2px; border-bottom: 1px solid #999; }
.dyn button { height: 23px; padding: 0 4px; border: 1px solid #0078d7; background: #e2eef8; }
.btn { justify-content: center; height: 23px; border: 1px solid #adadad; background: #e1e1e1; width: 105px; }
.btn.wide { width: 113px; }
.btn.ok { width: 72px; }
.ebtns { display: flex; justify-content: flex-end; gap: 15px; height: 41px; padding: 8px 13px 0 0; border-top: 1px solid #fff; }
.ebtns .btn:first-child { margin-right: 8px; }
.ebtns .wide { margin-right: 10px; }
.estat { position: relative; display: flex; gap: 2px; height: 22px; border-top: 1px solid #fff; }
.estat > span { width: 148px; border: 1px solid #d5d5d5; padding-left: 1px; background: linear-gradient(#f3f3f3, #fdfdfd); line-height: 18px; }
.estat .grow { flex: 1; }
.estat > .ic { position: absolute; right: 0; bottom: 0; }

.dialog { position: absolute; left: 230px; top: 248px; width: 411px; border: 1px solid #2d89ef; background: #f0f0f0; box-shadow: 0 3px 16px rgba(0, 0, 0, .4); }
.dcap { display: flex; justify-content: space-between; align-items: center; height: 25px; padding: 0 10px 0 3px; background: #fff; }
.dbody { padding: 16px 13px 8px; }
fieldset { min-width: 0; margin: 0 0 9px; padding: 4px 9px 6px 7px; border: 1px solid #dcdcdc; }
legend { padding: 0 1px 0 0; line-height: 12px; white-space: nowrap; }
legend label { display: block; }
textarea { display: block; width: 100%; height: 41px; padding: 2px; border: 1px solid #6f7780; background: #fff; color: #000; font: 10px/12px "DejaVu Sans Mono", monospace; resize: none; outline: 0; }
textarea::selection { background: #0078d7; color: #fff; }
.dbtns { display: flex; justify-content: flex-end; gap: 15px; padding: 3px 1px 0 0; }

.ime { position: absolute; left: 748px; top: 3px; display: flex; align-items: center; gap: 7px; height: 24px; padding: 0 4px 0 28px; border: 1px solid #a9c0d8; background: #fff; color: #1f74c8; }
.ime b { font-size: 15px; }
.imelogo { position: absolute; left: 744px; top: 0; }
.ball { position: absolute; left: 1114px; top: -26px; width: 45px; height: 45px; padding-top: 23px; border: 2px solid #d8d8d8; border-radius: 50%; background: #3fc35c; color: #fff; font-weight: 700; line-height: 15px; text-align: center; box-shadow: 0 1px 3px rgba(0, 0, 0, .5), inset 0 0 0 1px #1f9a3c; }
.marks { position: absolute; left: 0; top: 0; pointer-events: none; }
</style>
